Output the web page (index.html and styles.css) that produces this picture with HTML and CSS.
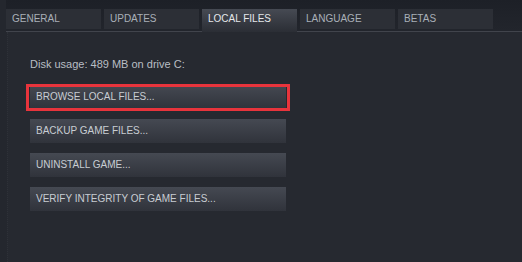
FILE: index.html
```html
<!DOCTYPE html>
<html>
<head>
<meta charset="utf-8">
<link rel="stylesheet" href="styles.css">
</head>
<body>
<div class="window">
  <div class="tabbar">
    <div class="tab">GENERAL</div>
    <div class="tab">UPDATES</div>
    <div class="tab active">LOCAL FILES</div>
    <div class="tab">LANGUAGE</div>
    <div class="tab">BETAS</div>
  </div>
  <div class="panel">
    <div class="disk">Disk usage: 489 MB on drive C:</div>
    <div class="buttons">
      <div class="btn highlighted">BROWSE LOCAL FILES...</div>
      <div class="btn">BACKUP GAME FILES...</div>
      <div class="btn">UNINSTALL GAME...</div>
      <div class="btn">VERIFY INTEGRITY OF GAME FILES...</div>
    </div>
  </div>
</div>
</body>
</html>
```
FILE: styles.css
```css
html, body {
  margin: 0;
  padding: 0;
}
body {
  width: 522px;
  height: 262px;
  overflow: hidden;
  background: #24272e;
  font-family: "Liberation Sans", Arial, sans-serif;
}
.window {
  display: flex;
  flex-direction: column;
  height: 262px;
}
.tabbar {
  display: flex;
  gap: 3px;
  padding: 9px 0 0 6px;
  margin-left: 6px;
  padding-left: 0;
  background: linear-gradient(#1d2027, #22252c);
  border-bottom: 1px solid #41444c;
  height: 22px;
  box-sizing: content-box;
}
.tab {
  width: 95px;
  height: 20px;
  box-sizing: border-box;
  padding-left: 6px;
  font-size: 10px;
  line-height: 20px;
  color: #a9b0b8;
  background: #2c2f36;
}
.tab.active {
  height: 23px;
  margin-bottom: -1px;
  color: #e4e7ea;
  background: linear-gradient(#464a53, #2b2e35);
  position: relative;
  z-index: 1;
}
.panel {
  flex: 1;
  margin-left: 7px;
  border-left: 1px dotted #2e3138;
  background: #262930;
  padding: 26px 0 0 22px;
}
.disk {
  font-size: 11px;
  line-height: 13px;
  color: #b9bec4;
}
.buttons {
  display: flex;
  flex-direction: column;
  gap: 10px;
  margin-top: 14px;
}
.btn {
  width: 256px;
  height: 24px;
  box-sizing: border-box;
  padding-left: 6px;
  font-size: 10px;
  line-height: 24px;
  color: #c8cdd3;
  background: linear-gradient(#454952, #30333b);
}
.highlighted {
  position: relative;
}
.highlighted::after {
  content: "";
  position: absolute;
  left: -4px;
  right: -4px;
  top: -1px;
  bottom: -2px;
  border: 3px solid #e8343c;
}
```
